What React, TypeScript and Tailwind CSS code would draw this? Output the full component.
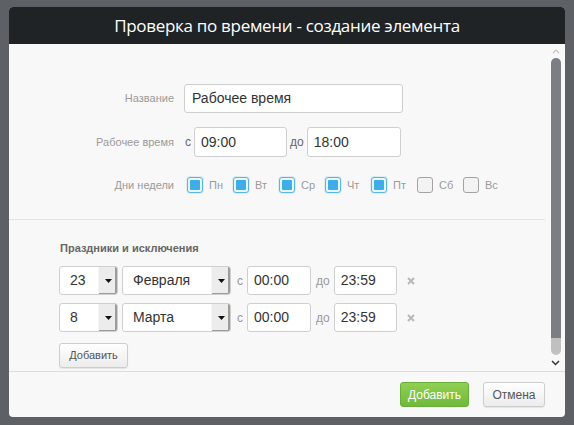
import React from "react";

const sans = { fontFamily: '"Liberation Sans", Arial, sans-serif' };

function Checkbox({ checked, label }: { checked: boolean; label: string }) {
  return (
    <div className="flex items-center w-[46px]">
      {checked ? (
        <span className="w-4 h-4 rounded-[3px] border border-[#5ab4e6] bg-[#eaf6fd] p-[2px] flex shadow-[0_0_0_1px_rgba(61,174,233,0.15)]">
          <span className="flex-1 bg-[#3daee9] rounded-[1px]" />
        </span>
      ) : (
        <span className="w-4 h-4 rounded-[3px] border border-[#a3a3a3] bg-[#f3f3f3]" />
      )}
      <span className="ml-[6px] text-[11px] text-[#9a9a9a]">{label}</span>
    </div>
  );
}

function Select({ value, width }: { value: string; width: number }) {
  return (
    <div
      className="h-[29px] bg-white border border-[#cfcfcf] rounded-[3px] flex items-stretch overflow-hidden"
      style={{ width }}
    >
      <div className="flex-1 flex items-center pl-[10px] text-[14px] text-[#333]">{value}</div>
      <div className="w-[19px] bg-[#ececec] flex items-center justify-center shadow-[inset_-2px_-1px_0_#9c9c9c] border-l border-[#f6f6f6]">
        <svg width="7" height="4" viewBox="0 0 7 4">
          <path d="M0 0h7L3.5 4z" fill="#111" />
        </svg>
      </div>
    </div>
  );
}

function TimeInput({ value, width, h = 29, size = 14 }: { value: string; width: number; h?: number; size?: number }) {
  return (
    <div
      className="bg-white border border-[#cfcfcf] rounded-[3px] flex items-center pl-[6px] text-[#333]"
      style={{ width, height: h, fontSize: size }}
    >
      {value}
    </div>
  );
}

function HolidayRow({ day, month }: { day: string; month: string }) {
  return (
    <div className="flex items-center">
      <Select value={day} width={59} />
      <div className="ml-[4px]">
        <Select value={month} width={109} />
      </div>
      <span className="ml-[6px] text-[12px] text-[#999]">с</span>
      <div className="ml-[4px]">
        <TimeInput value="00:00" width={64} />
      </div>
      <span className="ml-[5px] text-[12px] text-[#999]">до</span>
      <div className="ml-[4px]">
        <TimeInput value="23:59" width={63} />
      </div>
      <svg className="ml-[10px]" width="8" height="8" viewBox="0 0 8 8">
        <path d="M1 1l6 6M7 1l-6 6" stroke="#b8b8b8" strokeWidth="2" />
      </svg>
    </div>
  );
}

export default function App() {
  return (
    <div className="w-[574px] h-[425px] bg-[#5d6165] pt-[7px] pl-[9px]" style={sans}>
      <div className="w-[556px] h-[410px] bg-[#f8f8f8] rounded-[4px] overflow-hidden flex flex-col">
        <div
          className="h-[37px] bg-[#202326] flex items-center justify-center text-white text-[17px] tracking-[-0.3px]"
          style={{ fontFamily: '"Open Sans", "Noto Sans", sans-serif' }}
        >
          Проверка по времени - создание элемента
        </div>
        <div className="flex-1 flex min-h-0">
          <div className="w-[536px] flex flex-col">
            <div className="pt-[40px] pb-[26px] border-b border-[#e4e4e4]">
              <div className="flex items-center">
                <div className="w-[165px] text-right text-[11px] text-[#9a9a9a]">Название</div>
                <div className="ml-[10px]">
                  <div className="w-[219px] h-[29px] bg-white border border-[#cfcfcf] rounded-[3px] flex items-center pl-[7px] text-[14px] text-[#333]">
                    Рабочее время
                  </div>
                </div>
              </div>
              <div className="flex items-center mt-[14px]">
                <div className="w-[165px] text-right text-[11px] text-[#9a9a9a]">Рабочее время</div>
                <span className="ml-[11px] text-[12px] text-[#666]">с</span>
                <div className="ml-[3px]">
                  <TimeInput value="09:00" width={93} h={30} />
                </div>
                <span className="ml-[3px] text-[12px] text-[#666]">до</span>
                <div className="ml-[3px]">
                  <TimeInput value="18:00" width={94} h={30} />
                </div>
              </div>
              <div className="flex items-center mt-[20px] h-[16px]">
                <div className="w-[165px] text-right text-[11px] text-[#9a9a9a]">Дни недели</div>
                <div className="ml-[13px] flex items-center">
                  <Checkbox checked label="Пн" />
                  <Checkbox checked label="Вт" />
                  <Checkbox checked label="Ср" />
                  <Checkbox checked label="Чт" />
                  <Checkbox checked label="Пт" />
                  <Checkbox checked={false} label="Сб" />
                  <Checkbox checked={false} label="Вс" />
                </div>
              </div>
            </div>
            <div className="pl-[50px] pt-[22px]">
              <div className="text-[11px] font-bold text-[#666] leading-[13px] pl-[1px]">Праздники и исключения</div>
              <div className="mt-[11px] flex flex-col gap-[8px]">
                <HolidayRow day="23" month="Февраля" />
                <HolidayRow day="8" month="Марта" />
              </div>
              <button className="mt-[11px] w-[69px] h-[25px] rounded-[3px] border border-[#cdcdcd] bg-gradient-to-b from-white to-[#ececec] text-[11px] text-[#555] shadow-[0_1px_1px_rgba(0,0,0,0.08)]">
                Добавить
              </button>
            </div>
          </div>
          <div className="w-[20px] flex flex-col items-center pl-[1px]">
            <svg className="mt-[5px]" width="8" height="5" viewBox="0 0 8 5">
              <path d="M1 4l3-3 3 3" stroke="#c4c4c4" strokeWidth="1.2" fill="none" />
            </svg>
            <div className="mt-[4px] w-[10px] h-[297px] flex flex-col rounded-[5px] overflow-hidden">
              <div className="flex-1 bg-[#7b7e82]" />
              <div className="h-[17px] bg-[#c0c0c0]" />
            </div>
            <svg className="mt-[5px]" width="9" height="6" viewBox="0 0 9 6">
              <path d="M1 1l3.5 3.5L8 1" stroke="#333" strokeWidth="1.5" fill="none" />
            </svg>
          </div>
        </div>
        <div className="h-[46px] border-t border-[#dcdcdc] flex items-center justify-end pr-[20px] gap-[14px]">
          <button className="w-[69px] h-[25px] rounded-[3px] border border-[#6aae3a] bg-gradient-to-b from-[#8fd052] to-[#6fb93c] text-[12px] text-white">
            Добавить
          </button>
          <button className="w-[62px] h-[25px] rounded-[3px] border border-[#cdcdcd] bg-gradient-to-b from-white to-[#ececec] text-[12px] text-[#555] shadow-[0_1px_1px_rgba(0,0,0,0.08)]">
            Отмена
          </button>
        </div>
      </div>
    </div>
  );
}
